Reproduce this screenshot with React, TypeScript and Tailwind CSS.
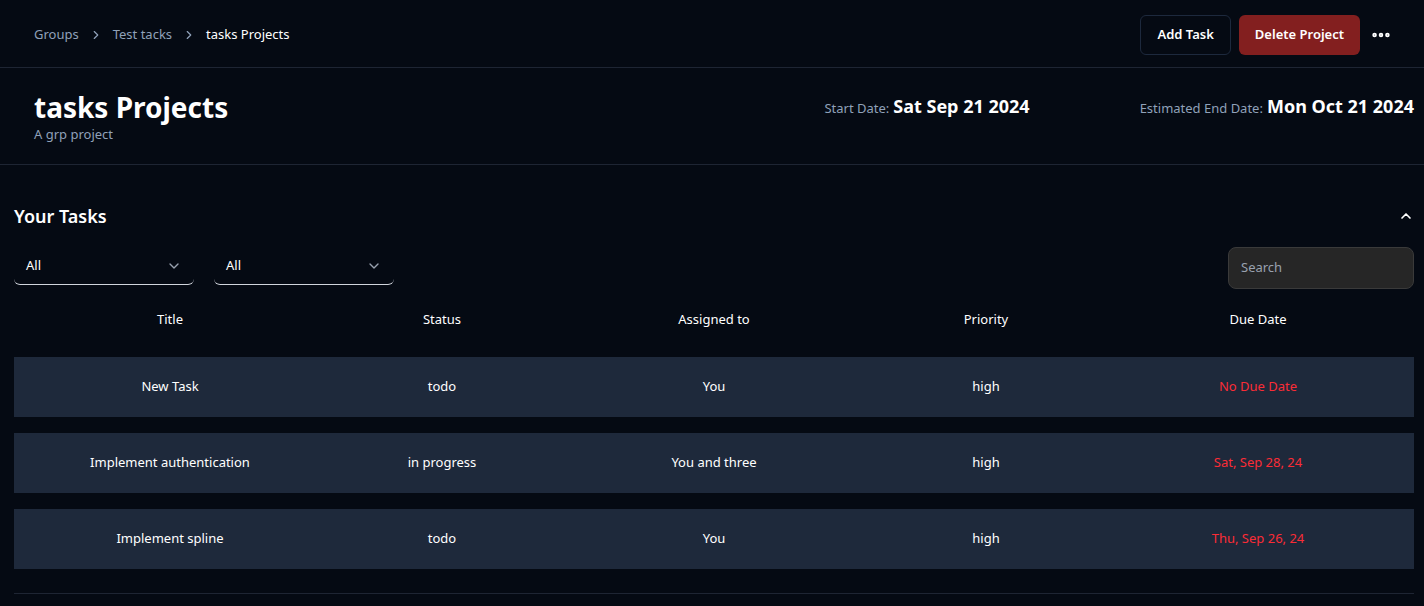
import { ChevronDown, ChevronRight, ChevronUp, MoreHorizontal } from 'lucide-react';

const tasks = [
	{ title: 'New Task', status: 'todo', assigned: 'You', priority: 'high', due: 'No Due Date' },
	{ title: 'Implement authentication', status: 'in progress', assigned: 'You and three', priority: 'high', due: 'Sat, Sep 28, 24' },
	{ title: 'Implement spline', status: 'todo', assigned: 'You', priority: 'high', due: 'Thu, Sep 26, 24' },
];

const FilterSelect = () => (
	<div className="w-[180px] h-[37px] flex items-center justify-between pl-3 pr-3 border-b border-gray-300 rounded-b-md text-[13px] text-white">
		<span>All</span>
		<ChevronDown size={16} className="text-gray-400" />
	</div>
);

const App = () => {
	return (
		<div className="min-h-[606px] bg-[#050a13] text-white font-['Noto_Sans',sans-serif]">
			<div className="h-[68px] flex items-center justify-between pl-[34px] pr-[32px] pt-0.5 border-b border-[#1e2533]">
				<div className="flex items-center gap-2.5 text-[13px]">
					<span className="text-slate-400">Groups</span>
					<ChevronRight size={14} className="text-slate-400" />
					<span className="text-slate-400">Test tacks</span>
					<ChevronRight size={14} className="text-slate-400" />
					<span className="text-white">tasks Projects</span>
				</div>
				<div className="flex items-center gap-2">
					<button className="h-10 px-4 border border-slate-800 rounded-md text-[13px] font-semibold">
						Add Task
					</button>
					<button className="h-10 px-4 bg-[#831f1f] rounded-md text-[13px] font-semibold">
						Delete Project
					</button>
					<MoreHorizontal size={22} className="ml-0.5 text-white" strokeWidth={3} />
				</div>
			</div>

			<div className="h-[97px] flex pl-[34px] pr-[10px] border-b border-[#1e2533]">
				<div className="pt-[23px]">
					<div className="text-[28px] font-bold leading-8">tasks Projects</div>
					<div className="text-[13px] text-slate-400 leading-5 mt-px">A grp project</div>
				</div>
				<div className="flex-1 flex justify-end gap-[110px] pt-[24px]">
					<div className="flex items-baseline gap-1">
						<span className="text-[13px] text-slate-400">Start Date:</span>
						<span className="text-lg font-bold">Sat Sep 21 2024</span>
					</div>
					<div className="flex items-baseline gap-1">
						<span className="text-[13px] text-slate-400">Estimated End Date:</span>
						<span className="text-lg font-bold">Mon Oct 21 2024</span>
					</div>
				</div>
			</div>

			<div className="pl-[14px] pr-[10px] pt-[37px]">
				<div className="flex items-center justify-between">
					<h2 className="text-lg font-semibold">Your Tasks</h2>
					<ChevronUp size={16} strokeWidth={2.5} />
				</div>

				<div className="flex items-start justify-between mt-[17px]">
					<div className="flex gap-5 pt-px">
						<FilterSelect />
						<FilterSelect />
					</div>
					<div className="w-[186px] h-[42px] flex items-center px-3 bg-[#262626] border border-[#3a3a3a] rounded-lg text-[13px] text-gray-400">
						Search
					</div>
				</div>

				<div className="mt-[12px] border-b border-[#1e2533] pb-6">
					<div className="grid grid-cols-5 px-5 h-[38px] items-center text-[13px] text-center">
						<div>Title</div>
						<div>Status</div>
						<div>Assigned to</div>
						<div>Priority</div>
						<div>Due Date</div>
					</div>
					<div className="flex flex-col gap-4 mt-[18px]">
						{tasks.map((t) => (
							<div key={t.title} className="grid grid-cols-5 px-5 h-[60px] items-center text-[13px] text-center bg-[#1e293b]">
								<div>{t.title}</div>
								<div>{t.status}</div>
								<div>{t.assigned}</div>
								<div>{t.priority}</div>
								<div className="text-red-500">{t.due}</div>
							</div>
						))}
					</div>
				</div>
			</div>
		</div>
	);
};

export default App;
